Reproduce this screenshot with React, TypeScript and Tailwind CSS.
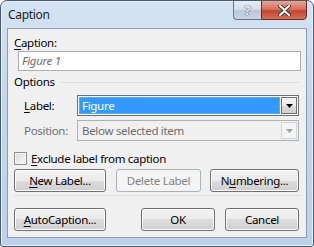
import React from "react"

const font = { fontFamily: '"Noto Sans", "Open Sans", sans-serif' }

function Btn({ children, disabled, className = "" }: { children: React.ReactNode; disabled?: boolean; className?: string }) {
  if (disabled) {
    return (
      <div className={`h-[23px] flex items-center justify-center rounded-[3px] border border-[#adb2b5] bg-[#f4f4f4] text-[#838383] ${className}`}>
        {children}
      </div>
    )
  }
  return (
    <div
      className={`h-[23px] flex items-center justify-center rounded-[3px] border border-[#707070] text-black shadow-[inset_0_0_0_1px_#fcfcfc] bg-[linear-gradient(to_bottom,#f2f2f2_0%,#ebebeb_50%,#dddddd_50%,#cfcfcf_100%)] ${className}`}
    >
      {children}
    </div>
  )
}

function U({ children }: { children: React.ReactNode }) {
  return <span className="underline underline-offset-2 decoration-1">{children}</span>
}

export default function App() {
  return (
    <div style={font} className="w-[314px] h-[247px] text-[11.5px] tracking-[-0.3px] leading-none select-none">
      <div className="relative w-full h-full rounded-t-[7px] rounded-b-[3px] border border-[#4a5a6e] bg-[linear-gradient(to_bottom,#d3e3f3_0%,#c3d7ec_40%,#bcd2ea_100%)] shadow-[inset_0_0_0_1px_#e8f0f9] overflow-hidden">
        {/* Title bar */}
        <div className="h-[27px] flex items-center pl-[7px] text-[#1e1e1e]">
          <span className="text-[12px]">Caption</span>
        </div>
        <div className="absolute top-[-1px] right-[6px] flex h-[20px]">
          <div className="w-[28px] flex items-center justify-center rounded-bl-[4px] border border-[#6b7686] border-r-0 bg-[linear-gradient(to_bottom,#e6edf5_0%,#d3dde9_50%,#b9c7d8_50%,#c9d5e3_100%)]">
            <span className="text-[13px] font-bold text-[#f4f6f8] [text-shadow:0_0_1px_#35404f,0_0_1px_#35404f]">?</span>
          </div>
          <div className="w-[46px] flex items-center justify-center rounded-br-[4px] border border-[#6b2a22] bg-[linear-gradient(to_bottom,#e9a492_0%,#d8735f_45%,#c5432d_55%,#d9705a_100%)]">
            <svg width="13" height="11" viewBox="0 0 13 11">
              <path d="M2 1 L6.5 5 L11 1 M2 10 L6.5 6 L11 10" stroke="#3b3b3b" strokeWidth="4" fill="none" strokeLinecap="square" />
              <path d="M2 1 L6.5 5 L11 1 M2 10 L6.5 6 L11 10" stroke="#ffffff" strokeWidth="2" fill="none" strokeLinecap="square" />
            </svg>
          </div>
        </div>

        {/* Client area */}
        <div className="mx-[6px] h-[210px] border border-[#8a9db5] bg-[#f0f0f0] pl-[6px] pr-[5px] pt-[7px]">
          <div className="h-[14px] flex items-center">
            <U>C</U>aption:
          </div>
          <div className="mt-[1px] ml-[4px] h-[20px] border border-[#abadb3] bg-white flex items-center pl-[3px] italic text-[#6d6d6d]">
            Figure 1
          </div>
          <div className="mt-[4px] h-[14px] flex items-center gap-[6px]">
            <span>Options</span>
            <div className="flex-1 h-px bg-[#dcdcdc] mr-[2px]" />
          </div>

          <div className="mt-[6px] flex items-center h-[21px]">
            <div className="w-[63px] pl-[10px]">
              <U>L</U>abel:
            </div>
            <div className="w-[222px] h-[21px] border border-[#707070] bg-white flex items-center p-[1px]">
              <div className="flex-1 h-full bg-[#3399ff] text-white flex items-center pl-[3px] outline outline-1 outline-dotted outline-[#f0a060] -outline-offset-1">
                Figure
              </div>
              <div className="w-[16px] h-[17px] ml-[1px] border border-[#707070] bg-[linear-gradient(to_bottom,#f2f2f2_0%,#ebebeb_50%,#dddddd_50%,#cfcfcf_100%)] flex items-center justify-center">
                <svg width="7" height="4" viewBox="0 0 7 4">
                  <path d="M0 0 H7 L3.5 4 Z" fill="#000" />
                </svg>
              </div>
            </div>
          </div>

          <div className="mt-[4px] flex items-center h-[21px] text-[#6d6d6d]">
            <div className="w-[63px] pl-[10px]">Position:</div>
            <div className="w-[222px] h-[21px] border border-[#adb2b5] bg-[#f0f0f0] flex items-center p-[1px]">
              <div className="flex-1 h-full flex items-center pl-[3px]">Below selected item</div>
              <div className="w-[16px] h-[17px] ml-[1px] border border-[#d5d5d5] bg-[#f4f4f4] flex items-center justify-center">
                <svg width="7" height="4" viewBox="0 0 7 4">
                  <path d="M0 0 H7 L3.5 4 Z" fill="#a0a0a0" />
                </svg>
              </div>
            </div>
          </div>

          <div className="mt-[11px] flex items-center h-[13px] gap-[4px]">
            <div className="w-[13px] h-[13px] border border-[#8e8f8f] bg-[linear-gradient(135deg,#dcdcdc,#f6f6f6)] shadow-[inset_0_0_0_1px_#f4f4f4]" />
            <span>
              <U>E</U>xclude label from caption
            </span>
          </div>

          <div className="mt-[4px] flex">
            <Btn className="w-[92px]">
              <U>N</U>ew Label...
            </Btn>
            <Btn disabled className="w-[85px] ml-[10px]">
              Delete Label
            </Btn>
            <Btn className="w-[89px] ml-[9px]">
              N<U>u</U>mbering...
            </Btn>
          </div>

          <div className="mt-[3px] h-px bg-[#dcdcdc] mr-[1px]" />

          <div className="mt-[12px] flex">
            <Btn className="w-[92px]">
              <U>A</U>utoCaption...
            </Btn>
            <Btn className="w-[74px] ml-[35px]">OK</Btn>
            <Btn className="w-[74px] ml-[10px]">Cancel</Btn>
          </div>
        </div>
      </div>
    </div>
  )
}
